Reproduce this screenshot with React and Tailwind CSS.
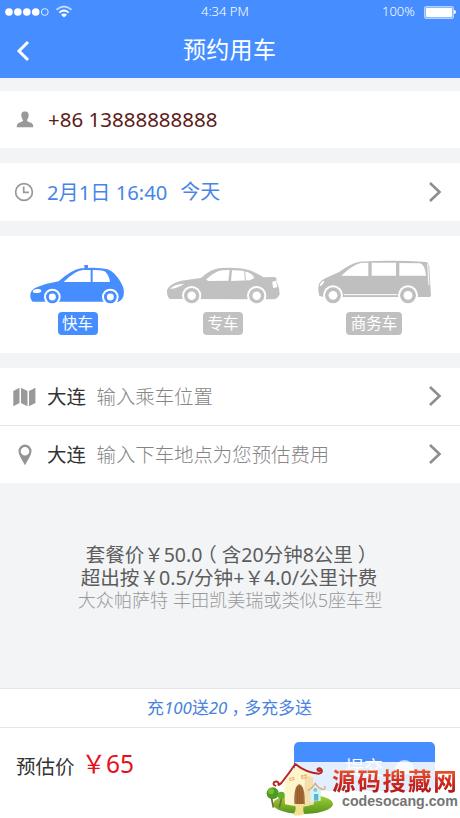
import React from "react";

const cjk = "font-['Noto_Sans','Noto_Sans_CJK_SC',sans-serif] font-normal";

function Wheel({ cx, cy, r, color }) {
  return (
    <g>
      <circle cx={cx} cy={cy} r={r + 6} fill="#fff" />
      <circle cx={cx} cy={cy} r={r} fill={color} />
      <circle cx={cx} cy={cy} r={r * 0.55} fill="#fff" />
    </g>
  );
}

function Taxi() {
  const c = "#468eff";
  return (
    <svg width="100" height="48" viewBox="84 54 300 144">
      <path fill={c} d="M253 75h11v10h-11zM98 185Q90 178 91 163Q93 148 112 141Q140 130 176 124Q215 89 243 85Q292 80 323 88Q346 96 365 132Q374 148 371 166Q368 180 356 185Z" />
      <path fill="#fff" d="M191 126Q226 91 250 90H272V126ZM278 90Q307 89 316 95Q328 107 330 126H278Z" />
      <ellipse cx="111" cy="153" rx="13" ry="6" fill="#fff" transform="rotate(-8 111 153)" />
      <Wheel cx={157} cy={171} r={19} color={c} />
      <Wheel cx={331} cy={171} r={19} color={c} />
    </svg>
  );
}

function Sedan() {
  const c = "#c1c1c1";
  return (
    <svg width="120" height="48" viewBox="42 54 360 144">
      <path fill={c} d="M59 177Q50 168 51 150Q57 132 94 122Q125 117 153 114Q182 86 214 84Q268 80 304 92L341 112L375 111L380 116L379 123L387 145L389 162Q386 174 373 178Z" />
      <path fill="#fff" d="M168 119Q193 95 216 91L239 90L235 122L176 123ZM246 91Q276 90 294 97Q309 104 313 114L300 121L243 123Z" />
      <path stroke={c} strokeWidth="3" d="M284 92L286 122" />
      <path fill="#fff" d="M62 145Q74 132 103 131Q88 142 62 147ZM367 125L378 122L382 142L369 144Z" />
      <Wheel cx={125} cy={167} r={23} color={c} />
      <Wheel cx={320} cy={167} r={23} color={c} />
    </svg>
  );
}

function Van() {
  const c = "#bfbfbf";
  return (
    <svg width="120" height="48" viewBox="42 54 360 144">
      <path fill={c} d="M58 168Q52 150 56 134Q60 122 79 113L116 97Q151 70 179 65Q280 59 379 66Q386 69 388 82L393 168L389 171L350 171H73Z" />
      <path fill="#fff" d="M124 107Q160 73 183 69L205 68V108ZM215 68H288V107H215ZM298 69L360 70Q375 74 378 107H298Z" />
      <path fill="#fff" d="M59 137Q62 124 73 122Q71 133 60 139Z" />
      <path stroke="#fff" strokeWidth="3" fill="none" d="M132 164H292M383 72L387 135" />
      <Wheel cx={99} cy={166} r={24} color={c} />
      <Wheel cx={324} cy={166} r={24} color={c} />
    </svg>
  );
}

function Row({ icon, children, chevron, className = "" }) {
  return (
    <div className={`flex items-center bg-white whitespace-nowrap ${className}`}>
      <div className="flex w-[47px] shrink-0 items-center pl-[13px]">{icon}</div>
      {children}
      {chevron && (
        <svg className="mr-[18px] mb-[1px] ml-auto" width="14" height="22" viewBox="0 0 14 22">
          <path d="M2 2L11.5 11L2 20" fill="none" stroke="#8e8e8e" strokeWidth="2.6" />
        </svg>
      )}
    </div>
  );
}

function House() {
  return (
    <svg width="72" height="56" viewBox="0 0 216 168">
      <defs>
        <linearGradient id="grass" x1="0" y1="0" x2="0" y2="1">
          <stop offset="0" stopColor="#a5d638" />
          <stop offset="1" stopColor="#57921b" />
        </linearGradient>
      </defs>
      <ellipse cx="120" cy="126" rx="90" ry="30" fill="url(#grass)" />
      <path d="M25 105L31 137M56 108L49 136" stroke="#7a6432" strokeWidth="5" />
      <circle cx="29" cy="94" r="18" fill="#4b9b20" />
      <circle cx="24" cy="88" r="9" fill="#78bb35" />
      <circle cx="55" cy="100" r="11" fill="#63aa2c" />
      <path d="M64 59L100 11L150 39L152 126Q120 139 66 127Z" fill="#fff5cc" />
      <path d="M126 40L150 45L152 127L122 134Z" fill="#f2dfad" />
      <path d="M94 125Q92 71 109 67Q127 71 125 129Z" fill="#a66b36" />
      <path d="M103 76V127M110 73V129M117 77V129" stroke="#754620" strokeWidth="1.5" />
      <path d="M94 126H125Q117 141 124 157Q104 164 90 158Q104 142 94 126Z" fill="#f5df91" />
      <path d="M78 49l15-5 2 10-15 4zM114 40l17-3 1 12-17 2z" fill="#e7b36d" />
      <path d="M85 48l2 9M79 54l15-5M122 39l1 11M115 46l17-3" stroke="#fff5cc" strokeWidth="2" />
      <path d="M37 71Q29 68 33 61Q42 55 47 64Q44 74 55 63Q79 33 97 6Q130 33 168 35Q181 31 175 22Q169 16 163 22Q166 29 171 26" fill="none" stroke="#b92725" strokeWidth="6" strokeLinecap="round" strokeLinejoin="round" />
      <path d="M141 81L157 67L173 82V116L142 119Z" fill="#d4f2f5" />
      <path d="M136 85Q148 79 157 64Q166 80 181 82Q190 80 185 73" fill="none" stroke="#e4a77a" strokeWidth="4" strokeLinecap="round" />
      <path d="M153 96h13v20h-13z" fill="#59b8cf" />
      <circle cx="157" cy="84" r="6" fill="#80c6d4" />
    </svg>
  );
}

export default function App() {
  return (
    <div className={`relative h-[818px] w-[460px] overflow-hidden bg-[#f2f4f6] ${cjk}`}>
      <header className="h-[78px] bg-[#468eff] text-white">
        <div className="flex h-[24px] items-center pl-[5px] text-[13px]">
          <svg width="68" height="16" viewBox="0 0 68 16">
            <g fill="#fff">
              <circle cx="4" cy="8" r="3.8" />
              <circle cx="12.9" cy="8" r="3.8" />
              <circle cx="21.8" cy="8" r="3.8" />
              <circle cx="30.7" cy="8" r="3.8" />
            </g>
            <circle cx="39.8" cy="8" r="3.4" fill="none" stroke="#fff" strokeWidth="0.8" />
            <g fill="none" stroke="#fff" strokeWidth="1.9">
              <path d="M51.5 5.8Q59 -0.8 66.5 5.8" opacity="0.65" />
              <path d="M54.4 8.6Q59 4.4 63.6 8.6" />
            </g>
            <path d="M56 10.8Q59 8.3 62 10.8L59 13.5Z" fill="#fff" />
          </svg>
          <span className="ml-[128px] w-[52px] font-[350] whitespace-nowrap">4:34 PM</span>
          <span className="ml-[129px] w-[36px] font-[350]">100%</span>
          <div className="ml-[6px] flex h-[13px] w-[30px] items-center justify-center rounded-[2px] border border-[#b5d2ff] bg-[#8ab7ff]">
            <div className="h-[9px] w-[26px] rounded-[1px] bg-white" />
          </div>
          <div className="h-[4px] w-[2px] rounded-r bg-white" />
        </div>
        <div className="flex h-[54px] items-center pl-[16px]">
          <svg width="15" height="22" viewBox="0 0 15 22">
            <path d="M12 2L3 11L12 20" fill="none" stroke="#fff" strokeWidth="3" />
          </svg>
          <h1 className="-mt-[4px] ml-[152px] text-[23px] leading-[30px] font-normal tracking-[0.3px]">预约用车</h1>
        </div>
      </header>

      <Row
        className="mt-[13px] h-[57px]"
        icon={
          <svg className="ml-[3px]" width="18" height="17" viewBox="0 0 18 17">
            <path fill="#999" d="M9 0.5C12 0.5 13 2.6 12.6 5.2C12.3 7.2 11.4 8.2 11 9C11 10.6 12 10.8 14.8 11.7C16.8 12.5 17.3 13.7 17.3 16.3H0.7C0.7 13.7 1.2 12.5 3.2 11.7C6 10.8 7 10.6 7 9C6.6 8.2 5.7 7.2 5.4 5.2C5 2.6 6 0.5 9 0.5Z" />
          </svg>
        }
      >
        <span className="ml-[1px] text-[20.5px] text-[#5c1a18]">+86 13888888888</span>
      </Row>

      <Row
        chevron
        className="mt-[15px] h-[58px]"
        icon={
          <svg className="ml-[1px]" width="20" height="20" viewBox="0 0 20 20">
            <circle cx="10" cy="10" r="8.4" fill="none" stroke="#999" strokeWidth="1.7" />
            <path d="M9.7 4.5V10.3H15" fill="none" stroke="#999" strokeWidth="1.7" />
          </svg>
        }
      >
        <span className="text-[20.2px] text-[#4785e8]">2月1日 16:40</span>
        <span className="ml-[13px] text-[20px] text-[#4785e8]">今天</span>
      </Row>

      <div className="mt-[15px] flex h-[117px] items-start bg-white pt-[22px] pl-[28px] text-[15.5px] leading-[23px] text-white">
        <div className="flex w-[100px] flex-col items-center">
          <Taxi />
          <span className="mt-[6px] mr-[1px] h-[23px] w-[40px] rounded-[4px] bg-[#468eff] text-center">快车</span>
        </div>
        <div className="ml-[36px] flex w-[120px] flex-col items-center">
          <Sedan />
          <span className="mt-[6px] mr-[2px] h-[23px] w-[40px] rounded-[4px] bg-[#c1c1c1] text-center">专车</span>
        </div>
        <div className="ml-[30px] flex w-[120px] flex-col items-center">
          <Van />
          <span className="mt-[6px] h-[23px] w-[56px] rounded-[4px] bg-[#bfbfbf] text-center">商务车</span>
        </div>
      </div>

      <Row
        chevron
        className="mt-[15px] h-[58px] border-b border-[#e5e6e7]"
        icon={
          <svg width="23" height="20" viewBox="0 0 23 20">
            <path fill="#999" d="M0.3 4L6.5 0.7V16L0.3 19.3ZM8 0.7L14.5 4V19.3L8 16ZM16 4L22.4 0.7V16L16 19.3Z" />
          </svg>
        }
      >
        <span className="text-[19.5px] text-[#333]">大连</span>
        <span className="ml-[10.5px] text-[19.4px] font-light text-[#858585]">输入乘车位置</span>
      </Row>
      <Row
        chevron
        className="h-[57px]"
        icon={
          <svg className="ml-[5px]" width="14" height="22" viewBox="0 0 14 22">
            <path fill="#949494" fillRule="evenodd" d="M7 0.5A6.5 6.5 0 0 1 13.5 7C13.5 11 9.5 16.5 7 21.3C4.5 16.5 0.5 11 0.5 7A6.5 6.5 0 0 1 7 0.5ZM7 2.9A4.3 4.3 0 1 0 7 11.5A4.3 4.3 0 0 0 7 2.9Z" />
          </svg>
        }
      >
        <span className="text-[19.5px] text-[#333]">大连</span>
        <span className="ml-[10.5px] text-[19.4px] font-light text-[#858585]">输入下车地点为您预估费用</span>
      </Row>

      <div className="flex h-[205px] flex-col items-center pt-[60px] text-[19.6px] leading-[23px] whitespace-nowrap text-[#5c5c5c]">
        <p className="mr-[2px] text-[19.5px]">
          套餐价￥50.0<span className="mr-[5px] -ml-[5px]">（</span>含20分钟8公里<span className="-mr-[5px] ml-[5px]">）</span>
        </p>
        <p className="mr-[2px]">超出按￥0.5/分钟+￥4.0/公里计费</p>
        <p className="text-[18.1px] font-light text-[#999]">大众帕萨特 丰田凯美瑞或类似5座车型</p>
      </div>

      <div className="flex h-[40px] items-center justify-center border-y border-[#e3e5e7] bg-white text-[16.9px] whitespace-nowrap text-[#4a82e0]">
        <span className="-ml-px">充<i>100</i>送<i>20</i><span className="-mr-[4px] ml-[4px]">，</span>多充多送</span>
      </div>

      <div className="flex h-[90px] bg-white whitespace-nowrap">
        <span className="mt-[24px] ml-[16px] text-[19.5px] leading-[30px] text-[#333]">预估价</span>
        <span className="mt-[19px] ml-[7px] w-[80px] text-[24.5px] leading-[34px] text-[#e60f1b]">￥65</span>
        <button className="mt-[14px] ml-[132px] h-[49px] w-[141px] rounded-[5px] bg-[#468eff] pt-px text-[19px] leading-[50px] text-white">提交</button>
      </div>

      <div className="absolute right-0 bottom-0 h-[58px] w-[197px]">
        <div className="absolute top-0 left-[132px] h-[14px] w-[19px] rounded-t-full bg-white/70" />
        <div className="absolute right-0 bottom-0 h-[56px] w-[165px] bg-white/85" />
        <div className="absolute bottom-0 left-0">
          <House />
        </div>
        <div className="absolute top-[5px] left-[69px] bg-linear-to-b from-[#f0642c] via-[#d42a1c] to-[#a31212] bg-clip-text text-[23.5px] leading-[32px] font-bold tracking-[1.8px] whitespace-nowrap text-transparent">源码搜藏网</div>
        <div className="absolute top-[31px] left-[79px] font-['Liberation_Sans',sans-serif] text-[14.2px] leading-[20px] font-bold whitespace-nowrap text-[#757575]">codesocang.com</div>
      </div>
    </div>
  );
}
